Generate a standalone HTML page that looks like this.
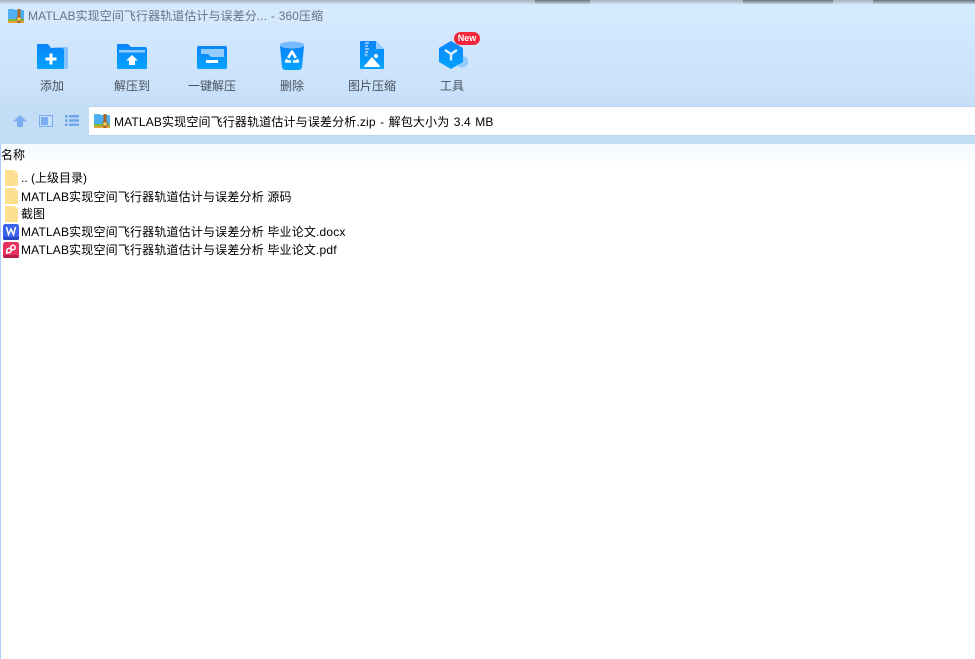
<!DOCTYPE html>
<html lang="zh">
<head>
<meta charset="utf-8">
<title>360压缩</title>
<style>
html,body{margin:0;padding:0;background:#fff;}
body{width:975px;height:659px;overflow:hidden;position:relative;font-family:"Liberation Sans","Noto Sans CJK SC",sans-serif;font-size:12px;color:#000;}
.a{position:absolute;white-space:pre;line-height:16px;}
.s{letter-spacing:.17px;}
.box{position:absolute;}
.lbl{position:absolute;top:78px;width:80px;text-align:center;color:#48525e;line-height:16px;}
svg{position:absolute;overflow:visible;}
</style>
</head>
<body>
<div class="box" style="left:0;top:0;width:975px;height:107px;background:linear-gradient(#d6eafe 0,#d3e8fe 30px,#c6dff8 106px);"></div>
<div class="box" style="left:0;top:0;width:975px;height:5px;background:linear-gradient(#a3adb8,#bccbdb 40%,#d6eafe);"></div>
<div class="box" style="left:535px;top:0;width:55px;height:4px;background:linear-gradient(#666f79,#c4d6e8);"></div>
<div class="box" style="left:743px;top:0;width:90px;height:4px;background:linear-gradient(#666f79,#c4d6e8);"></div>
<div class="box" style="left:873px;top:0;width:102px;height:4px;background:linear-gradient(#666f79,#c4d6e8);"></div>
<div class="box" style="left:0;top:106px;width:975px;height:38px;background:#c4ddf7;"></div>
<div class="box" style="left:89px;top:107px;width:886px;height:28px;background:#fff;"></div>
<div class="box" style="left:89px;top:106px;width:886px;height:1px;background:#b8d5f2;"></div>
<div class="box" style="left:89px;top:135px;width:886px;height:1px;background:#b8d5f2;"></div>
<div class="box" style="left:0;top:144px;width:975px;height:22px;background:linear-gradient(#f3f9fe,#fff);"></div>
<div class="box" style="left:0;top:144px;width:1px;height:515px;background:#a9d0fa;"></div>

<!-- title icon -->
<svg style="left:8px;top:9px" width="16" height="14" viewBox="0 0 16 14">
<path d="M0 1Q0 0 1 0H6L7 1H15Q16 1 16 2V11H0Z" fill="#4db0f2"/>
<rect x="0" y="10" width="16" height="2" fill="#79b93c"/>
<rect x="0" y="12" width="16" height="2" fill="#e8a23a"/>
<rect x="9.5" y="0" width="3" height="14" fill="#a9682a"/>
<rect x="9" y="8" width="4" height="4" fill="#f2cf6a" stroke="#9a5a1e" stroke-width=".7"/>
</svg>
<div class="a" style="left:28px;top:8px;color:#69737f;letter-spacing:.08px;word-spacing:.4px;">MATLAB实现空间飞行器轨道估计与误差分... - 360压缩</div>

<!-- add -->
<svg style="left:37px;top:44px" width="31" height="25" viewBox="0 0 31 25">
<defs><linearGradient id="g" x1="0" y1="0" x2="0" y2="1"><stop offset="0" stop-color="#0c84fb"/><stop offset="1" stop-color="#02a3fd"/></linearGradient></defs>
<path d="M14 3H29Q31 3 31 5V23Q31 25 29 25H25V5Z" fill="#86c3fd"/>
<path d="M0 1Q0 0 1 0H11L14 4H25Q27 4 27 6V25H1Q0 25 0 24Z" fill="url(#g)"/>
<path d="M12.500 9.500h3v4h4v3h-4v4h-3v-4h-4v-3h4z" fill="#fff"/>
</svg>
<div class="lbl" style="left:12px;">添加</div>

<!-- extract to -->
<svg style="left:117px;top:44px" width="30" height="25" viewBox="0 0 30 25">
<path d="M0 1Q0 0 1 0H11L14 3H28Q30 3 30 5V24Q30 25 29 25H1Q0 25 0 24Z" fill="url(#g)"/>
<rect x="2" y="6" width="26" height="2.500" fill="#93cbfd"/>
<path d="M15 11L21 16.500H18V21H12V16.500H9Z" fill="#fff"/>
</svg>
<div class="lbl" style="left:92px;">解压到</div>

<!-- one-click -->
<svg style="left:197px;top:46px" width="30" height="23" viewBox="0 0 30 23">
<rect x="0" y="0" width="30" height="23" rx="2" fill="url(#g)"/>
<path d="M4 3H27V11H14L11 8H4Z" fill="#93cbfd"/>
<rect x="9" y="14" width="12" height="3" fill="#fff"/>
</svg>
<div class="lbl" style="left:172px;">一键解压</div>

<!-- delete -->
<svg style="left:280px;top:41px" width="24" height="29" viewBox="0 0 24 29">
<path d="M0 5L2 26Q2.500 29 6 29H18Q21.500 29 22 26L24 5Z" fill="url(#g)"/>
<ellipse cx="12" cy="4" rx="12" ry="3.500" fill="#78bcfd"/>
<path d="M12 10.500L18 20.500H6Z" fill="none" stroke="#fff" stroke-width="2.600" stroke-linejoin="round" stroke-dasharray="7.500 1.800"/>
</svg>
<div class="lbl" style="left:252px;">删除</div>

<!-- image compress -->
<svg style="left:360px;top:41px" width="24" height="28" viewBox="0 0 24 28">
<path d="M1 0H16L24 8V27Q24 28 23 28H1Q0 28 0 27V1Q0 0 1 0Z" fill="url(#g)"/>
<path d="M16 0L24 8H16Z" fill="#93cbfd"/>
<path d="M5 1h4v2H5zM5 4h3v2H5zM5 7h4v2H5zM5 10h3v2H5z" fill="#8ac6fd"/>
<circle cx="6" cy="14" r="1.400" fill="#8ac6fd"/>
<circle cx="16" cy="15" r="2" fill="#fff"/>
<path d="M4 26Q4 24 6 23L11 17Q12 16 13 17L18 23Q20 24 20 26Z" fill="#fff"/>
</svg>
<div class="lbl" style="left:332px;">图片压缩</div>

<!-- tools -->
<svg style="left:439px;top:41px" width="30" height="28" viewBox="0 0 30 28">
<path d="M23 14L29 17V24L23 27L17 24V17Z" fill="#93cbfd"/>
<path d="M12 0L24 7V21L12 28L0 21V7Z" fill="url(#g)"/>
<path d="M6 9L12 13L18 9M12 13V19.500" fill="none" stroke="#dcf1ff" stroke-width="2.400"/>
</svg>
<div class="box" style="left:454px;top:32px;width:26px;height:13px;border-radius:7px;background:#f4263c;color:#fff;font-size:9px;font-weight:bold;line-height:13px;text-align:center;">New</div>
<div class="lbl" style="left:412px;">工具</div>

<!-- nav icons -->
<svg style="left:13px;top:115px" width="14" height="12" viewBox="0 0 14 12">
<path d="M7 0L14 6.500H10V12H4V6.500H0Z" fill="#7aaef0"/>
</svg>
<svg style="left:39px;top:115px" width="14" height="12" viewBox="0 0 14 12">
<rect x=".5" y=".5" width="13" height="11" fill="none" stroke="#7aaef0"/>
<rect x="2" y="2" width="7" height="8" fill="#7aaef0"/>
<rect x="10" y="2" width="2" height="8" fill="#cfe3fa"/>
</svg>
<svg style="left:65px;top:115px" width="14" height="11" viewBox="0 0 14 11">
<path d="M0 0h2.500v2.500H0zM4 0h10v2.500H4zM0 4.250h2.500v2.500H0zM4 4.250h10v2.500H4zM0 8.500h2.500V11H0zM4 8.500h10V11H4z" fill="#6ea6ee"/>
</svg>

<!-- address icon -->
<svg style="left:94px;top:114px" width="16" height="14" viewBox="0 0 16 14">
<path d="M0 1Q0 0 1 0H6L7 1H15Q16 1 16 2V11H0Z" fill="#4db0f2"/>
<rect x="0" y="10" width="16" height="2" fill="#79b93c"/>
<rect x="0" y="12" width="16" height="2" fill="#e8a23a"/>
<rect x="9.500" y="0" width="3" height="14" fill="#a9682a"/>
<rect x="9" y="8" width="4" height="4" fill="#f2cf6a" stroke="#9a5a1e" stroke-width=".7"/>
</svg>
<div class="a" style="left:114px;top:114px;letter-spacing:.15px;word-spacing:.9px;">MATLAB实现空间飞行器轨道估计与误差分析.zip - 解包大小为 3.4 MB</div>

<div class="a" style="left:1px;top:147px;">名称</div>

<!-- rows -->
<svg style="left:5px;top:170px" width="13" height="16" viewBox="0 0 13 16"><path d="M0 1Q0 0 1 0H10L13 3V16H0Z" fill="#fcdf8f"/><path d="M10 0V3H13Z" fill="#fff0c4"/></svg>
<div class="a" style="left:21px;top:170px;">.. (上级目录)</div>
<svg style="left:5px;top:188px" width="13" height="16" viewBox="0 0 13 16"><path d="M0 1Q0 0 1 0H10L13 3V16H0Z" fill="#fcdf8f"/><path d="M10 0V3H13Z" fill="#fff0c4"/></svg>
<div class="a s" style="left:21px;top:188.500px;">MATLAB实现空间飞行器轨道估计与误差分析 源码</div>
<svg style="left:5px;top:206px" width="13" height="16" viewBox="0 0 13 16"><path d="M0 1Q0 0 1 0H10L13 3V16H0Z" fill="#fcdf8f"/><path d="M10 0V3H13Z" fill="#fff0c4"/></svg>
<div class="a" style="left:21px;top:206px;">截图</div>
<svg style="left:3px;top:224px" width="16" height="16" viewBox="0 0 16 16"><rect width="16" height="16" rx="2.500" fill="#3a63ee"/><rect y="13" width="16" height="3" rx="1.500" fill="#2947c4"/><path d="M3.500 3L5.500 10.500L8 5L10.500 10.500L12.500 3" fill="none" stroke="#fff" stroke-width="1.500"/></svg>
<div class="a s" style="left:21px;top:224px;">MATLAB实现空间飞行器轨道估计与误差分析 毕业论文.docx</div>
<svg style="left:3px;top:242px" width="16" height="16" viewBox="0 0 16 16"><rect width="16" height="16" rx="2.500" fill="#e8315f"/><rect y="13" width="16" height="3" rx="1.500" fill="#b81f48"/><circle cx="10" cy="5.500" r="2.200" fill="none" stroke="#fff" stroke-width="1.500"/><circle cx="6" cy="8.500" r="2.200" fill="none" stroke="#fff" stroke-width="1.500"/><path d="M3.800 8.500V12" stroke="#fff" stroke-width="1.500"/></svg>
<div class="a s" style="left:21px;top:242px;">MATLAB实现空间飞行器轨道估计与误差分析 毕业论文.pdf</div>
</body>
</html>
